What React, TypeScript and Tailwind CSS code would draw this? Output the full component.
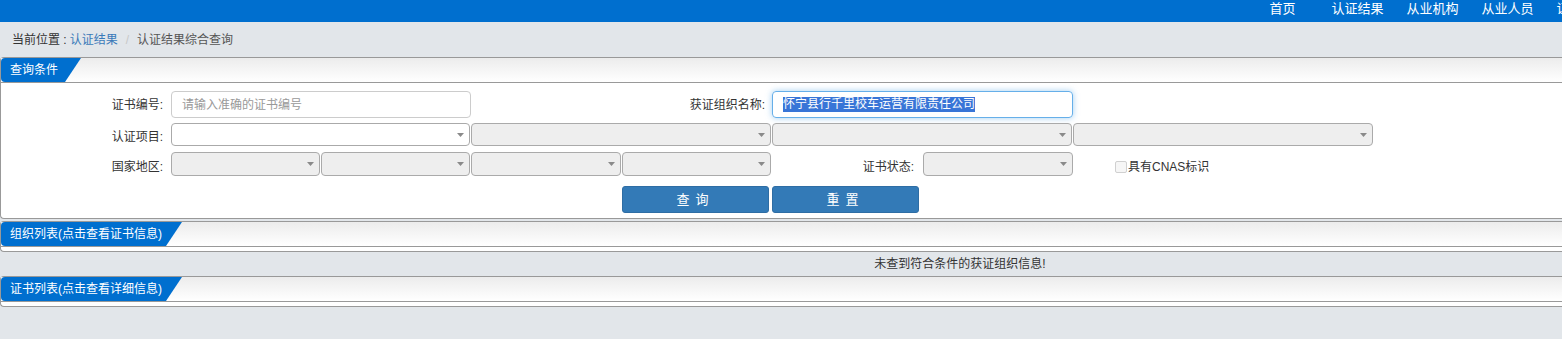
import React from 'react';

const font = { fontFamily: '"Liberation Sans", "Noto Sans CJK SC", sans-serif' };

const NAV = ['首页', '认证结果', '从业机构', '从业人员', '证书查询', '关于我们'];

const Arrow = () => (
  <svg width="7" height="4" viewBox="0 0 7 4" className="absolute right-[5px] top-1/2 -translate-y-1/2">
    <path d="M0 0h7L3.5 4z" fill="#8a8a8a" />
  </svg>
);

const Sel: React.FC<{ w: string; white?: boolean; h?: string }> = ({ w, white, h = 'h-[23px]' }) => (
  <div className={`relative ${w} ${h} mr-[1px] shrink-0 rounded-[4px] border border-[#aaaaaa] ${white ? 'bg-white' : 'bg-[#eeeeee]'}`}>
    <Arrow />
  </div>
);

const PanelHead: React.FC<{ title: string; tab: string }> = ({ title, tab }) => (
  <div className="flex h-[25px] items-stretch border-b border-[#999] bg-gradient-to-b from-[#ececec] to-white">
    <div
      className={`${tab} flex items-center rounded-l-[4px] bg-[#006fcf] pl-[9px] text-[12px] text-white [clip-path:polygon(0_0,100%_0,calc(100%-16px)_100%,0_100%)]`}
    >
      {title}
    </div>
  </div>
);

export default function App() {
  return (
    <div className="h-[339px] w-[1562px] overflow-hidden bg-[#e2e6ea]" style={font}>
      <div className="w-[1920px]">
        {/* top nav */}
        <div className="flex h-[22px] bg-[#006fcf] pl-[1245px]">
          {NAV.map((n) => (
            <div key={n} className="w-[75px] pt-[1px] text-center text-[13px] leading-[16px] text-white">
              {n}
            </div>
          ))}
        </div>

        {/* breadcrumb */}
        <div className="flex h-[35px] items-center pl-[12px] text-[12px]">
          <span className="text-[#333]">当前位置 : </span>
          <span className="ml-[3px] text-[#3a7ab9]">认证结果</span>
          <span className="mx-[8px] text-[#c8c8c8]">/</span>
          <span className="text-[#555]">认证结果综合查询</span>
        </div>

        {/* query panel */}
        <div className="rounded-l-[4px] border border-r-0 border-[#999] bg-white">
          <PanelHead title="查询条件" tab="w-[80px]" />
          <div className="px-0 pb-[5px] pt-[8px] text-[12px] text-[#333]">
            <div className="flex items-center">
              <div className="w-[170px] pr-[8px] text-right">证书编号:</div>
              <div className="flex h-[27px] w-[300px] items-center rounded-[4px] border border-[#cccccc] pl-[10px] text-[#999]">
                请输入准确的证书编号
              </div>
              <div className="w-[301px] pr-[7px] text-right">获证组织名称:</div>
              <div className="flex h-[27px] w-[301px] items-center rounded-[4px] border border-[#66afe9] pl-[10px] shadow-[0_0_6px_rgba(102,175,233,0.6)]">
                <span className="bg-[#3875d7] leading-[15px] text-white">怀宁县行千里校车运营有限责任公司</span>
              </div>
            </div>

            <div className="mt-[5px] flex items-center">
              <div className="w-[170px] pr-[8px] pt-[5px] text-right">认证项目:</div>
              <Sel w="w-[299px]" white />
              <Sel w="w-[300px]" />
              <Sel w="w-[300px]" />
              <Sel w="w-[300px]" />
            </div>

            <div className="mt-[6px] flex items-center">
              <div className="w-[170px] pr-[8px] pt-[5px] text-right">国家地区:</div>
              <Sel w="w-[149px]" h="h-[24px]" />
              <Sel w="w-[149px]" h="h-[24px]" />
              <Sel w="w-[150px]" h="h-[24px]" />
              <Sel w="w-[149px]" h="h-[24px]" />
              <div className="w-[151px] pr-[9px] pt-[5px] text-right">证书状态:</div>
              <Sel w="w-[150px]" h="h-[24px]" />
              <div className="ml-[41px] flex items-center pt-[5px]">
                <span className="mr-[1px] h-[12px] w-[12px] rounded-[2px] border border-[#d0d0d0] bg-[#f6f6f6]" />
                具有CNAS标识
              </div>
            </div>

            <div className="mt-[10px] flex pl-[621px]">
              <button className="h-[27px] w-[147px] rounded-[3px] border border-[#2e6da4] bg-[#337ab7] text-[13px] tracking-[6px] text-white">
                查询
              </button>
              <button className="ml-[3px] h-[27px] w-[147px] rounded-[3px] border border-[#2e6da4] bg-[#337ab7] text-[13px] tracking-[6px] text-white">
                重置
              </button>
            </div>
          </div>
        </div>

        {/* org list */}
        <div className="mt-[2px] h-[31px] rounded-l-[4px] border border-r-0 border-[#999] bg-white">
          <PanelHead title="组织列表(点击查看证书信息)" tab="w-[181px]" />
        </div>
        <div className="flex h-[24px] items-center justify-center text-[12px] text-[#333]">
          未查到符合条件的获证组织信息!
        </div>

        {/* cert list */}
        <div className="h-[31px] rounded-l-[4px] border border-r-0 border-[#999] bg-white">
          <PanelHead title="证书列表(点击查看详细信息)" tab="w-[181px]" />
        </div>
      </div>
    </div>
  );
}
